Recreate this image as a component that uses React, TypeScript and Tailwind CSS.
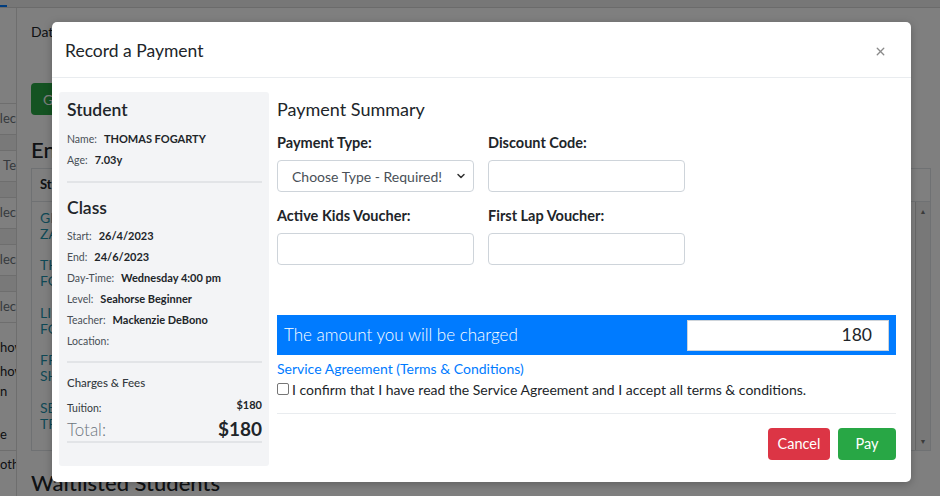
import { ChevronDown, X } from "lucide-react";

const sideRows = [
  { kind: "box", text: "elec" },
  { kind: "band" },
  { kind: "box", text: "l Te" },
  { kind: "band" },
  { kind: "box", text: "elec" },
  { kind: "band" },
  { kind: "box", text: "elec" },
  { kind: "band" },
  { kind: "box", text: "elec" },
];

const tableRows = [
  ["GI", "ZA"],
  ["TH", "FO"],
  ["LI", "FO"],
  ["FR", "SH"],
  ["SE", "TR"],
];

function InfoRow({ label, value }: { label: string; value?: string }) {
  return (
    <div className="flex h-[21px] items-center whitespace-nowrap">
      <span className="mr-[7px] text-[10.5px] text-[#495057]">{label}</span>
      {value && <span className="text-[11px] font-bold text-[#212529]">{value}</span>}
    </div>
  );
}

function Field({ label, children }: { label: string; children?: React.ReactNode }) {
  return (
    <div className="flex flex-col">
      <label className="mb-[7px] h-[20px] text-[14.5px] font-bold leading-[20px] text-[#212529]">{label}</label>
      {children ?? <div className="h-[32px] rounded-[4px] border border-[#ced4da] bg-white" />}
    </div>
  );
}

function BackgroundPage() {
  return (
    <div className="flex h-full flex-col">
      {/* top nav strip */}
      <div className="flex h-[10px] border-b border-[#d6d6d6] bg-[#eeeeee]">
        <div className="mt-auto h-[2px] w-[7px] bg-[#007bff]" />
      </div>

      <div className="flex flex-1">
        {/* left filter column */}
        <aside className="flex w-[17px] shrink-0 flex-col overflow-hidden whitespace-nowrap border-r border-[#dddddd] pt-[95px] text-[13px] text-[#6c757d]">
          {sideRows.map((r, i) =>
            r.kind === "box" ? (
              <div key={i} className="flex h-[32px] items-center justify-end border-y border-[#dcdcdc] bg-white">
                {r.text}
              </div>
            ) : (
              <div key={i} className="h-[15px] bg-[#f3f3f3]" />
            )
          )}
          <div className="mt-[6px] flex flex-col text-[13px] leading-[20px] text-[#212529]">
            <span className="mt-[8px] text-right">how</span>
            <span className="mt-[4px] text-right">how</span>
            <span>n</span>
            <span className="mt-[23px]">e</span>
          </div>
          <div className="mt-[6px] border-t border-[#dcdcdc] pt-[4px] text-right text-[13px] text-[#212529]">oth</div>
        </aside>

        {/* main content */}
        <main className="flex-1 px-[14px] text-[#212529]">
          <div className="mt-[14px] text-[14px] leading-[20px]">Date</div>
          <div className="mt-[41px] flex h-[32px] w-[80px] items-center rounded-[4px] bg-[#28a745] px-[12px] text-[14px] text-white">Go</div>
          <div className="mt-[22px] text-[22px] font-medium leading-[26px]">Enrolled Students</div>
          <div className="mt-[5px] flex h-[283px] w-[900px] flex-col border border-[#dee2e6]">
            <div className="flex h-[33px] items-center border-b border-[#dee2e6] px-[8px] text-[13px] font-bold">
              Student
            </div>
            <div className="flex flex-1">
              <div className="flex flex-1 flex-col px-[8px] text-[14px] leading-[16px] text-[#1f93ad]">
                {tableRows.map((r, i) => (
                  <div key={i} className="flex h-[47.5px] flex-col justify-center">
                    <span>{r[0]}</span>
                    <span>{r[1]}</span>
                  </div>
                ))}
              </div>
              <div className="flex w-[15px] flex-col items-center justify-between border-l border-[#d0d0d0] bg-[#f1f1f1] py-[4px] text-[7px] text-[#777]">
                <span>▲</span>
                <span>▼</span>
              </div>
            </div>
          </div>
          <div className="mt-[19px] text-[22px] font-medium leading-[26px]">Waitlisted Students</div>
        </main>
      </div>
    </div>
  );
}

export default function App() {
  return (
    <div className="relative h-[496px] w-[940px] overflow-hidden bg-white font-['Lato','Segoe_UI',sans-serif]">
      <BackgroundPage />

      {/* backdrop */}
      <div className="absolute inset-0 bg-black/50" />

      {/* modal */}
      <div className="absolute left-[52px] top-[22px] flex w-[859px] flex-col rounded-[5px] bg-white shadow-[0_2px_8px_rgba(0,0,0,0.25)]">
        <header className="flex h-[56px] items-center justify-between border-b border-[#e9ecef] pl-[13px] pr-[24px] pt-[3px]">
          <h5 className="text-[17.5px] text-[#212529]">Record a Payment</h5>
          <X className="h-[13px] w-[13px] text-[#8a8a8a]" strokeWidth={2.5} />
        </header>

        <div className="flex gap-[8px] pb-[16px] pl-[7px] pr-[15px] pt-[14px]">
          {/* left info panel */}
          <aside className="flex w-[210px] shrink-0 flex-col rounded-[3px] bg-[#f3f4f6] pb-[23px] pl-[8px] pr-[7px] pt-[7px]">
            <div className="h-[22px] text-[17.5px] font-semibold leading-[22px] text-[#212529]">Student</div>
            <div className="mt-[8px] flex flex-col">
              <InfoRow label="Name:" value="THOMAS FOGARTY" />
              <InfoRow label="Age:" value="7.03y" />
            </div>
            <div className="mt-[10px] border-t-2 border-[#e2e4e7]" />

            <div className="mt-[14px] h-[22px] text-[17.5px] font-semibold leading-[22px] text-[#212529]">Class</div>
            <div className="mt-[7px] flex flex-col">
              <InfoRow label="Start:" value="26/4/2023" />
              <InfoRow label="End:" value="24/6/2023" />
              <InfoRow label="Day-Time:" value="Wednesday 4:00 pm" />
              <InfoRow label="Level:" value="Seahorse Beginner" />
              <InfoRow label="Teacher:" value="Mackenzie DeBono" />
              <InfoRow label="Location:" />
            </div>
            <div className="mt-[9px] border-t-2 border-[#e2e4e7]" />

            <div className="mt-[10px] h-[20px] text-[11.5px] font-medium leading-[20px] text-[#343a40]">Charges &amp; Fees</div>
            <div className="mt-[4px] flex h-[20px] justify-between">
              <span className="self-end text-[10.5px] text-[#343a40]">Tuition:</span>
              <span className="text-[11px] font-bold text-[#212529]">$180</span>
            </div>
            <div className="flex h-[26px] items-center justify-between border-b-2 border-[#e2e4e7] pt-[1px]">
              <span className="text-[17px] font-light text-[#6c757d]">Total:</span>
              <span className="text-[19px] font-bold text-[#212529]">$180</span>
            </div>
          </aside>

          {/* payment form */}
          <section className="flex flex-1 flex-col">
            <h5 className="mt-[5px] h-[24px] text-[18px] leading-[24px] text-[#212529]">Payment Summary</h5>

            <div className="mt-[12px] grid w-[408px] grid-cols-2 gap-x-[14px] gap-y-[14px]">
              <Field label="Payment Type:">
                <div className="flex h-[32px] items-center justify-between rounded-[4px] border border-[#ced4da] bg-white pl-[14px] pr-[6px] text-[14px] text-[#495057]">
                  <span>Choose Type - Required!</span>
                  <ChevronDown className="h-[12px] w-[12px] text-[#333]" strokeWidth={3} />
                </div>
              </Field>
              <Field label="Discount Code:" />
              <Field label="Active Kids Voucher:" />
              <Field label="First Lap Voucher:" />
            </div>

            <div className="mt-[50px] flex h-[40px] items-center justify-between bg-[#007bff] pl-[7px] pr-[7px]">
              <span className="text-[17px] font-light text-white">The amount you will be charged</span>
              <div className="flex h-[31px] w-[202px] items-center justify-end border border-[#ced4da] bg-white pr-[16px] text-[17.5px] text-[#212529]">
                180
              </div>
            </div>

            <a className="mt-[4px] text-[14px] leading-[20px] text-[#007bff]">Service Agreement (Terms &amp; Conditions)</a>
            <label className="flex h-[20px] items-center gap-[3px] text-[14px] text-[#212529]">
              <span className="h-[12px] w-[12px] rounded-[2px] border border-[#767676] bg-white" />
              I confirm that I have read the Service Agreement and I accept all terms &amp; conditions.
            </label>

            <div className="mt-[14px] border-t border-[#e9ecef]" />

            <div className="mt-[14px] flex justify-end gap-[8px]">
              <button className="h-[32px] w-[62px] rounded-[4px] bg-[#dc3545] text-[14.5px] text-white">Cancel</button>
              <button className="h-[32px] w-[58px] rounded-[4px] bg-[#28a745] text-[14.5px] text-white">Pay</button>
            </div>
          </section>
        </div>
      </div>
    </div>
  );
}
